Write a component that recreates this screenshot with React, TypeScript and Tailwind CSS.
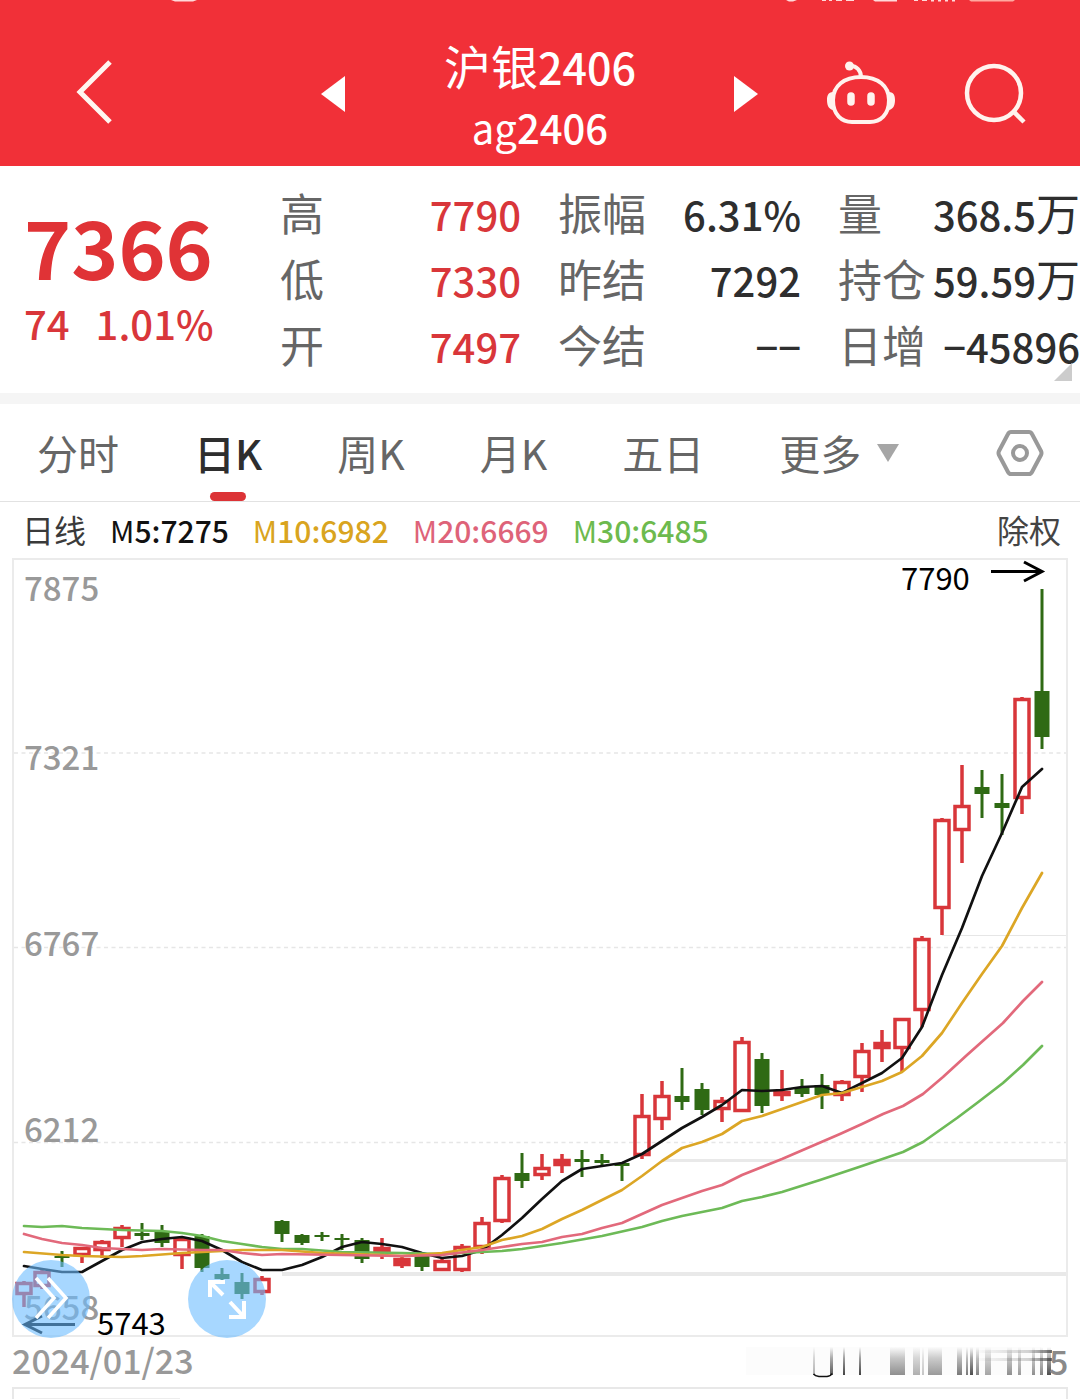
import React from "react";

type Candle = [x: number, high: number, top: number, bottom: number, low: number, kind: "up" | "down"];

const candles: Candle[] = [
  [24, 1281, 1282, 1295, 1307, "up"],
  [42, 1270, 1271, 1287, 1289, "up"],
  [62, 1251, 1256, 1258, 1267, "down"],
  [82, 1247, 1247, 1256, 1263, "up"],
  [102, 1240, 1241, 1251, 1258, "up"],
  [122, 1225, 1227, 1239, 1247, "up"],
  [142, 1223, 1233, 1236, 1240, "down"],
  [162, 1225, 1231, 1243, 1247, "down"],
  [182, 1238, 1238, 1256, 1269, "up"],
  [202, 1234, 1236, 1268, 1272, "down"],
  [222, 1268, 1274, 1279, 1281, "down"],
  [242, 1273, 1282, 1294, 1299, "down"],
  [262, 1276, 1278, 1293, 1295, "up"],
  [282, 1220, 1221, 1234, 1242, "down"],
  [302, 1234, 1235, 1243, 1245, "down"],
  [322, 1232, 1235, 1237, 1241, "down"],
  [342, 1234, 1238, 1240, 1250, "down"],
  [362, 1238, 1240, 1259, 1263, "down"],
  [382, 1238, 1247, 1253, 1259, "up"],
  [402, 1257, 1258, 1266, 1268, "up"],
  [422, 1255, 1256, 1267, 1271, "down"],
  [442, 1259, 1260, 1271, 1271, "up"],
  [462, 1244, 1246, 1271, 1272, "up"],
  [482, 1217, 1222, 1248, 1254, "up"],
  [502, 1175, 1177, 1222, 1223, "up"],
  [522, 1153, 1173, 1181, 1188, "down"],
  [542, 1154, 1167, 1176, 1180, "up"],
  [562, 1154, 1159, 1166, 1173, "up"],
  [582, 1150, 1159, 1162, 1177, "down"],
  [602, 1154, 1160, 1163, 1166, "down"],
  [622, 1162, 1163, 1166, 1181, "down"],
  [642, 1094, 1115, 1156, 1159, "up"],
  [662, 1081, 1095, 1120, 1130, "up"],
  [682, 1068, 1096, 1102, 1110, "down"],
  [702, 1083, 1089, 1110, 1115, "down"],
  [722, 1097, 1100, 1110, 1122, "up"],
  [742, 1037, 1041, 1112, 1112, "up"],
  [762, 1053, 1059, 1106, 1113, "down"],
  [782, 1070, 1091, 1096, 1101, "up"],
  [802, 1079, 1087, 1094, 1097, "down"],
  [822, 1074, 1085, 1095, 1109, "down"],
  [842, 1080, 1081, 1096, 1101, "up"],
  [862, 1043, 1050, 1078, 1092, "up"],
  [882, 1030, 1042, 1049, 1062, "up"],
  [902, 1018, 1018, 1049, 1072, "up"],
  [922, 936, 938, 1011, 1027, "up"],
  [942, 818, 819, 909, 935, "up"],
  [962, 765, 805, 831, 863, "up"],
  [982, 770, 787, 794, 818, "down"],
  [1002, 774, 803, 808, 835, "down"],
  [1022, 697, 698, 799, 814, "up"],
  [1042, 589, 691, 737, 749, "down"],
];

const averages = [
  {
    color: "#111111",
    points:
      "24,1266 42,1269 62,1272 82,1272 102,1261 122,1250 142,1242 162,1239 182,1237 202,1241 222,1250 242,1262 262,1270 282,1270 302,1265 322,1257 342,1247 362,1242 382,1244 402,1247 422,1253 442,1258 462,1256 482,1250 502,1235 522,1218 542,1199 562,1181 582,1169 602,1166 622,1163 642,1154 662,1141 682,1128 702,1117 722,1105 742,1090 762,1091 782,1090 802,1087 822,1086 842,1093 862,1083 882,1073 902,1058 922,1027 942,975 962,928 982,876 1002,833 1022,787 1042,769",
  },
  {
    color: "#6dba57",
    points:
      "24,1226 42,1227 62,1226 82,1228 122,1230 162,1231 182,1233 202,1236 222,1241 242,1244 262,1247 282,1249 302,1249 342,1252 402,1253 442,1254 482,1252 502,1251 522,1249 562,1243 602,1236 642,1227 662,1221 682,1216 722,1208 742,1201 762,1197 782,1192 820,1180 862,1166 903,1152 923,1142 957,1118 977,1103 1003,1083 1023,1065 1042,1046",
  },
  {
    color: "#dca625",
    points:
      "24,1252 62,1255 82,1256 122,1257 142,1256 182,1253 202,1252 242,1250 282,1250 322,1253 382,1255 402,1256 442,1253 462,1250 482,1247 502,1240 522,1236 542,1229 562,1219 582,1210 602,1200 622,1190 642,1176 662,1161 682,1148 702,1142 722,1134 742,1121 762,1116 782,1109 802,1102 822,1095 842,1093 862,1087 882,1081 902,1072 922,1056 942,1033 962,1003 982,974 1002,946 1022,908 1042,873",
  },
  {
    color: "#e2697b",
    points:
      "24,1234 42,1239 62,1243 82,1245 102,1248 142,1250 162,1249 202,1250 222,1250 242,1253 262,1255 282,1254 342,1255 402,1256 442,1255 482,1250 502,1247 522,1244 542,1242 562,1237 582,1234 602,1228 622,1223 642,1214 662,1205 682,1198 702,1191 722,1185 742,1175 782,1159 840,1134 862,1124 883,1114 903,1106 923,1094 943,1077 967,1055 1003,1023 1023,1001 1042,982",
  },
];

const axis = [
  ["7875", 601],
  ["7321", 770],
  ["6767", 956],
  ["6212", 1142],
  ["5658", 1320],
] as const;

function CandleMark({ data }: { data: Candle }) {
  const [x, high, top, bottom, low, kind] = data;
  if (kind === "down") {
    return (
      <g fill="#2f6a14">
        <rect x={x - 1.5} y={high} width="3" height={low - high} />
        <rect x={x - 7.5} y={top} width="15" height={bottom - top} />
      </g>
    );
  }
  const h = Math.max(bottom - top - 3, 2);
  return (
    <g stroke="#d8363a" strokeWidth="3.5" fill="none">
      <path d={`M${x} ${high}V${top + 1}M${x} ${bottom - 1}V${low}`} />
      <rect x={x - 7} y={top + 1.5} width="14" height={h} fill={h < 6 ? "#d8363a" : "none"} />
    </g>
  );
}

function Chart() {
  return (
    <svg viewBox="0 558 1080 780" className="block h-auto w-full" role="img" aria-label="日K">
      <g stroke="#e6e6e6" strokeWidth="1.5" strokeDasharray="4 3.5">
        <path d="M14 753H1066M14 947.5H1066M14 1142.5H1066" />
      </g>
      <path d="M282 1274H1067" stroke="#e9e9e9" strokeWidth="4" />
      <path d="M662 1160.5H1067" stroke="#e9e9e9" strokeWidth="3" />
      <path d="M942 935.5H1067" stroke="#e6e6e6" strokeWidth="1" />
      <rect x="13" y="559" width="1054" height="777" fill="none" stroke="#ebebeb" strokeWidth="2" />
      <g fill="#999999" fontSize="33" fontWeight="500">
        {axis.map(([label, y]) => (
          <text key={label} x="24" y={y}>
            {label}
          </text>
        ))}
      </g>
      {candles.map((c) => (
        <CandleMark key={c[0]} data={c} />
      ))}
      {averages.map((a) => (
        <polyline key={a.color} points={a.points} fill="none" stroke={a.color} strokeWidth="2.7" strokeLinejoin="round" strokeLinecap="round" />
      ))}
      <g fill="none" stroke="#000" strokeWidth="3">
        <path d="M991 571.5H1042M1024 562L1042 571.5L1024 581" />
        <path d="M75 1324.5H25M42 1316L25 1324.5L42 1333" />
      </g>
      <g fill="#000" fontSize="31">
        <text x="901" y="590">
          7790
        </text>
        <text x="97" y="1335">
          5743
        </text>
      </g>
    </svg>
  );
}

const stats = [
  {
    tone: "text-[#d9363a]",
    rows: [
      ["高", "7790", ""],
      ["低", "7330", ""],
      ["开", "7497", ""],
    ],
  },
  {
    tone: "text-[#2e2e2e]",
    rows: [
      ["振幅", "6.31%", ""],
      ["昨结", "7292", ""],
      ["今结", "−−", ""],
    ],
  },
  {
    tone: "text-[#2e2e2e]",
    rows: [
      ["量", "368.5", "万"],
      ["持仓", "59.59", "万"],
      ["日增", "−45896", ""],
    ],
  },
];

const legend = [
  { name: "M", value: "5:7275", tone: "text-[#111111]" },
  { name: "M", value: "10:6982", tone: "text-[#d9a420]" },
  { name: "M", value: "20:6669", tone: "text-[#de6379]" },
  { name: "M", value: "30:6485", tone: "text-[#6dba4e]" },
];

const tabs = ["分时", "日K", "周K", "月K", "五日"];

/* x, width, opacity of the streaks that cover the end date */
const streaks: [number, number, number][] = [
  [813, 2, 0.35], [830, 3, 0.75], [843, 2, 0.85], [859, 2, 0.85],
  [890, 15, 0.5], [913, 7, 0.35], [922, 2, 0.25], [928, 14, 0.45],
  [957, 5, 0.6], [966, 2, 0.6], [970, 3, 0.8], [976, 3, 0.55], [985, 6, 0.4],
  [1007, 5, 0.5], [1018, 3, 0.45], [1032, 3, 0.5], [1040, 3, 0.55], [1047, 4, 0.8],
];

function EndDate() {
  return (
    <svg viewBox="0 0 324 48" className="h-12 w-[324px]" role="img" aria-label="5">
      <defs>
        <linearGradient id="fade" x1="0" y1="0" x2="0" y2="1">
          <stop offset="0" stopColor="#222" stopOpacity="0" />
          <stop offset="0.4" stopColor="#222" stopOpacity="0.5" />
          <stop offset="1" stopColor="#222" />
        </linearGradient>
        <linearGradient id="side" x1="0" y1="0" x2="1" y2="0">
          <stop offset="0" stopColor="#333" stopOpacity="0" />
          <stop offset="0.7" stopColor="#333" stopOpacity="0.3" />
          <stop offset="1" stopColor="#333" />
        </linearGradient>
      </defs>
      <rect x="2" y="9" width="295" height="28" fill="#f7f7f7" opacity="0.4" />
      {streaks.map(([x, w, o]) => (
        <rect key={x} x={x - 744} y="9" width={w} height="28" fill="url(#fade)" opacity={o} />
      ))}
      <path d="M69.500 36Q71 38 75 38.500H83Q87 38 88 35.500" fill="none" stroke="#111" strokeWidth="1.500" />
      <rect x="230" y="12" width="78" height="3" fill="url(#side)" opacity="0.7" />
      <rect x="230" y="20" width="78" height="3" fill="url(#side)" opacity="0.7" />
      <text x="305" y="37" fill="#8a8a8a" fontSize="34">
        5
      </text>
    </svg>
  );
}

export default function App() {
  return (
    <div className="min-h-screen w-full overflow-hidden bg-white font-['Noto_Sans_CJK_SC',sans-serif]">
      <header className="relative grid grid-cols-[190fr_67fr_152fr_262fr_150fr_80fr_179fr] items-center bg-[#f13038] pt-[33px] pb-[7px] text-white">
        <svg viewBox="0 0 1080 3" className="absolute top-0 left-0 w-full" aria-hidden="true" fill="#ffd9d9">
          <path d="M171 0H197L193 1.500H175ZM786 0H797L793 1.500H789ZM822 0h4v1h-4zM829 0h3v1h-3zM836 0h6v1h-6zM846 0h8v1h-8zM873 0H897V1.500H875ZM914 0h4v1h-4zM922 0h5v1h-5zM931 0h3v1.500h-3zM938 0h3v1.500h-3zM945 0h3v1.500h-3zM952 0h3v1.500h-3z" />
          <path d="M969 0h46l-2 1.500h-42z" fill="#ffa9a0" />
        </svg>
        <button type="button" aria-label="返回" className="flex justify-center">
          <svg viewBox="0 0 40 68" className="mb-2 h-[68px] w-10" fill="none" stroke="#fff6f0" strokeWidth="5">
            <path d="M35 4L5 34L35 64" />
          </svg>
        </button>
        <button type="button" aria-label="上一个" className="col-start-3 flex justify-center">
          <svg viewBox="0 0 24 36" className="mb-1 h-9 w-6" fill="#fff">
            <path d="M24 0V36L0 18Z" />
          </svg>
        </button>
        <h1 className="flex flex-col items-center whitespace-nowrap">
          <span className="text-[47px] leading-[63px]">
            沪银<span className="text-[43px] leading-none font-medium">2406</span>
          </span>
          <span className="text-[40px] leading-[63px]">
            ag<span className="leading-none font-medium">2406</span>
          </span>
        </h1>
        <button type="button" aria-label="下一个" className="flex justify-center">
          <svg viewBox="0 0 24 36" className="mb-1 h-9 w-6" fill="#fff">
            <path d="M0 0V36L24 18Z" />
          </svg>
        </button>
        <button type="button" aria-label="智能助手" className="flex justify-center">
          <svg viewBox="0 0 72 68" className="mb-1 h-[68px] w-[72px]" fill="none" stroke="#fff3ee" strokeWidth="4">
            <path d="M36 17C53 17 64 26 64 40C64 55 55 62 45 62H27C17 62 8 55 8 40C8 26 19 17 36 17Z" />
            <path d="M36 17C36 10 31 6 26 6" />
            <circle cx="24.500" cy="6" r="4.500" fill="#fff3ee" stroke="none" />
            <path d="M8 32C3 32 2 36 2 40S3 49 8 50ZM64 32C69 32 70 36 70 40S69 49 64 50Z" fill="#fff3ee" stroke="none" />
            <path d="M26 36V42M46 36V42" strokeWidth="7.500" strokeLinecap="round" />
          </svg>
        </button>
        <button type="button" aria-label="搜索" className="flex justify-center pl-2">
          <svg viewBox="0 0 64 64" className="mb-1 h-16 w-16" fill="none" stroke="#fff3ee" strokeWidth="4.500">
            <circle cx="31" cy="31" r="27" />
            <path d="M50 49L61 60" />
          </svg>
        </button>
      </header>

      <section className="relative grid grid-cols-[243fr_241fr_243fr_242fr] gap-x-[37px] border-b-[11px] border-[#f5f5f5] pt-[15px] pb-[14px] whitespace-nowrap">
        <div className="pl-6 font-medium text-[#e03336]">
          <p className="pt-4 text-[80px] leading-[96px] font-bold">7366</p>
          <p className="flex gap-[26px] text-[40px] leading-[60px] text-[#d9363a]">
            <span>74</span>
            <span>1.01%</span>
          </p>
        </div>
        {stats.map((col) => (
          <dl key={col.rows[0][0]} className="text-[40px] leading-[66px]">
            {col.rows.map(([label, value, unit]) => (
              <div key={label} className="flex items-baseline justify-between">
                <dt className="text-[44px] leading-none text-[#666666]">{label}</dt>
                <dd className={col.tone}>
                  <span className="font-medium">{value}</span>
                  {unit && <span className="text-[44px] leading-none">{unit}</span>}
                </dd>
              </div>
            ))}
          </dl>
        ))}
        <svg viewBox="0 0 18 18" className="absolute right-2 bottom-3 size-[18px]" fill="#cccccc" aria-hidden="true">
          <path d="M18 0V18H0Z" />
        </svg>
      </section>

      <nav className="flex h-[98px] items-stretch gap-[75px] border-b border-[#e2e2e2] pr-[36px] pl-[37px] text-[41px] whitespace-nowrap text-[#666666]">
        {tabs.map((tab) => (
          <button
            key={tab}
            type="button"
            className={tab === "日K" ? "relative font-medium text-[#2e2e2e]" : "relative"}
          >
            {tab}
            {tab === "日K" && (
              <span className="absolute bottom-0 left-1/2 h-[9px] w-9 -translate-x-1/2 rounded-full bg-[#dc3336]" />
            )}
          </button>
        ))}
        <button type="button" className="flex items-center gap-4">
          更多
          <svg viewBox="0 0 22 18" className="h-[18px] w-[22px]" fill="#a6a6a6">
            <path d="M0 0H22L11 18Z" />
          </svg>
        </button>
        <button type="button" aria-label="设置" className="ml-auto flex items-center">
          <svg viewBox="0 0 48 48" className="size-12" fill="none" stroke="#999999" strokeWidth="4">
            <path d="M15 3H33Q35 3 36 5L45 22Q46 24 45 26L36 43Q35 45 33 45H15Q13 45 12 43L3 26Q2 24 3 22L12 5Q13 3 15 3Z" />
            <circle cx="24" cy="24" r="7" />
          </svg>
        </button>
      </nav>

      <div className="flex items-baseline gap-6 pr-[19px] pl-[22px] text-[30px] leading-[56px] whitespace-nowrap">
        <span className="text-[32px] leading-none text-[#3a3a3a]">日线</span>
        {legend.map((l) => (
          <span key={l.value} className={l.tone}>
            {l.name}
            <span className="font-medium">{l.value}</span>
          </span>
        ))}
        <button type="button" className="ml-auto text-[32px] leading-none text-[#444444]">
          除权
        </button>
      </div>

      <div className="relative">
        <Chart />
        <button
          type="button"
          aria-label="展开"
          className="absolute bottom-0 left-3 flex size-[78px] items-center justify-center rounded-full bg-[#6cbcff]/60"
        >
          <svg viewBox="0 0 78 78" className="size-full" fill="none" stroke="#fff" strokeWidth="3.500">
            <path d="M24 18L42 38L24 58M36 18L54 38L36 58" />
          </svg>
        </button>
        <button
          type="button"
          aria-label="全屏"
          className="absolute bottom-0 left-[188px] flex size-[78px] items-center justify-center rounded-full bg-[#6cbcff]/60"
        >
          <svg viewBox="0 0 78 78" className="size-full" fill="none" stroke="#fff" strokeWidth="4">
            <path d="M22 37V22H37M22 22L35 35M42 42L56 57M56 41V57H41" />
          </svg>
        </button>
      </div>

      <div className="flex h-[49px] items-start justify-between px-3 text-[34px] font-medium text-[#999999]">
        <time dateTime="2024-01-23" className="leading-[44px]">
          2024/01/23
        </time>
        <EndDate />
      </div>
      <div className="mx-3 h-3 border-2 border-b-0 border-[#e8e8e8] px-4 pt-[9px]">
        <div className="h-px w-[150px] bg-[#ededed]" />
      </div>
    </div>
  );
}
